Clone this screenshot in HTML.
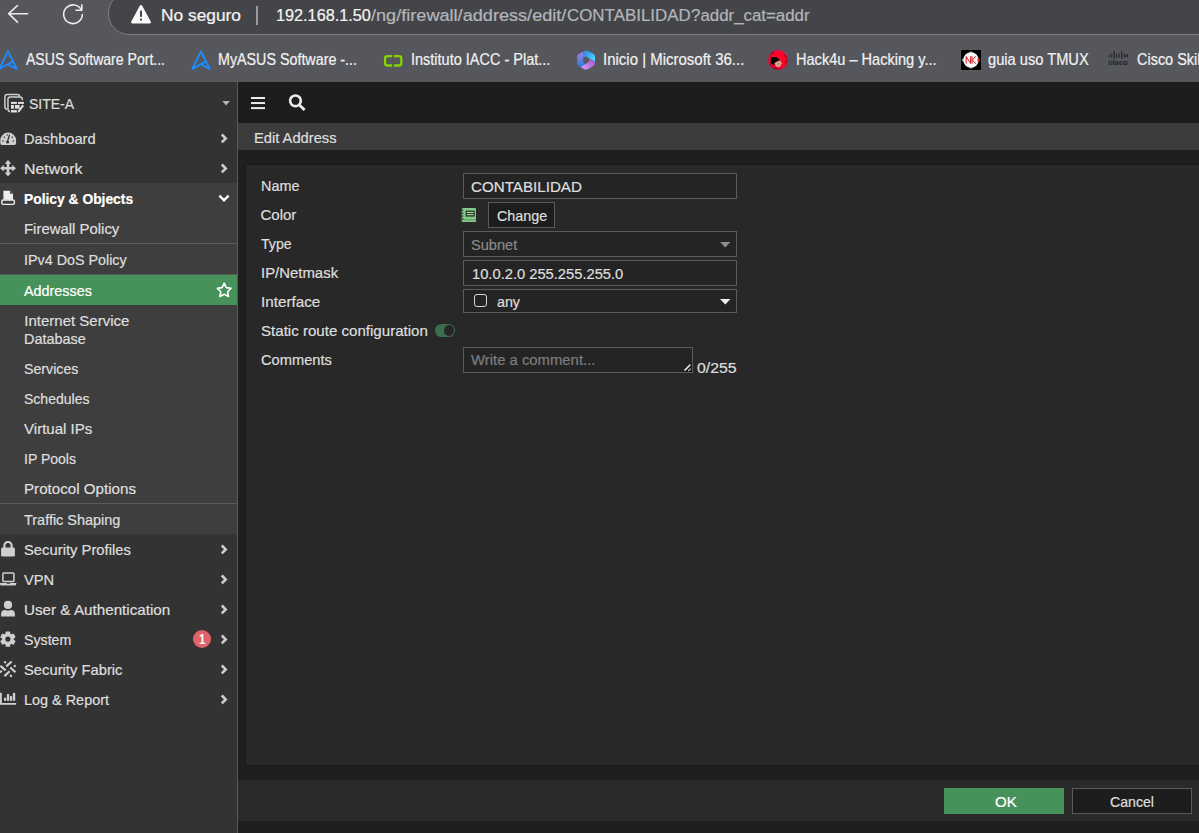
<!DOCTYPE html>
<html>
<head>
<meta charset="utf-8">
<title>Edit Address</title>
<style>
*{box-sizing:border-box;margin:0;padding:0}
html,body{width:1199px;height:833px;overflow:hidden;background:#1f1f1f;font-family:"Liberation Sans",sans-serif;color:#e2e2e2}
.abs{position:absolute}
.t{position:absolute;white-space:nowrap;line-height:1;transform-origin:0 0;-webkit-text-stroke:.22px currentColor}
/* browser chrome */
#chrome{position:absolute;left:0;top:0;width:1199px;height:82px;background:#56575c}
#pill{position:absolute;left:108px;top:-8px;width:1300px;height:42.6px;border-radius:21px;background:#444549;border:1.3px solid #7c7d81}
/* app */
#side{position:absolute;left:0;top:82px;width:238px;height:751px;background:#333333;border-right:1px solid #595959}
#topbar{position:absolute;left:238px;top:82px;width:961px;height:41px;background:#1d1d1d}
#hdr{position:absolute;left:238px;top:122.6px;width:961px;height:27.2px;background:#3c3c3c}
#panel{position:absolute;left:246px;top:164.7px;width:953px;height:600.3px;background:#282828;box-shadow:0 0 2.5px rgba(0,0,0,.45)}
#foot{position:absolute;left:238px;top:780px;width:961px;height:41px;background:#2a2a2a}
.sub{position:absolute;left:0;width:237px;background:#3e3e3e}
.sep{position:absolute;left:0;width:237px;height:1px;background:#5a5a5a}
.inp{position:absolute;left:463px;width:274px;height:26px;border:1px solid #5b5b5b;background:#242424}
</style>
</head>
<body>
<div id="chrome">
  <div id="pill"></div>
</div>
<div id="side">
  <div class="sub" style="top:101px;height:351px"></div>
  <div class="sep" style="top:161px"></div>
  <div class="sep" style="top:192px"></div>
  <div class="abs" style="left:0;top:193px;width:237px;height:30px;background:#47915a"></div>
  <div class="sep" style="top:421px"></div>
</div>
<div id="topbar"></div>
<div id="hdr"></div>
<div id="panel"></div>
<div id="foot"></div>

<!-- form controls -->
<div class="inp" style="top:173px"></div>
<div class="abs" style="left:488px;top:202px;width:67px;height:26px;border:1px solid #5b5b5b;background:#1d1d1d"></div>
<div class="inp" style="top:231.2px;height:25.8px"></div>
<div class="inp" style="top:260.2px;height:25.8px"></div>
<div class="inp" style="top:289px;height:24px"></div>
<div class="inp" style="top:347px;width:230px;height:26px"></div>
<!-- carets -->
<svg class="abs" style="left:720px;top:242px" width="11" height="6" viewBox="0 0 11 6"><path d="M0 0h10.5L5.25 5.6z" fill="#8c8c8c"/></svg>
<svg class="abs" style="left:720px;top:298.5px" width="11" height="6" viewBox="0 0 11 6"><path d="M0 0h10.5L5.25 5.6z" fill="#f0f0f0"/></svg>
<!-- interface checkbox icon -->
<div class="abs" style="left:473.5px;top:294.3px;width:13.6px;height:12.8px;border:1.6px solid #d8d8d8;border-radius:3px"></div>
<!-- toggle -->
<div class="abs" style="left:435px;top:324.2px;width:20.4px;height:12.8px;border-radius:6.4px;background:#3c6d4a"></div>
<div class="abs" style="left:443.9px;top:325.4px;width:10.4px;height:10.4px;border-radius:50%;background:#272727"></div>
<!-- textarea resize handle -->
<svg class="abs" style="left:681px;top:362px" width="11" height="10.5" viewBox="0 0 11 10.5"><path d="M10.5 0.5V10H1Z" fill="#121212"/><path d="M9.4 2.6L3.4 8.6" stroke="#e4e4e4" stroke-width="1.5" fill="none"/><path d="M9.6 6.6L7.2 9" stroke="#cfcfcf" stroke-width="1.1" fill="none"/></svg>
<!-- color icon (address book) -->
<svg class="abs" style="left:461px;top:207.8px" width="15.4" height="14.4" viewBox="0 0 15.4 14.4">
 <rect x="0.7" y="0" width="14.6" height="14.2" rx="1.7" fill="#84c985"/>
 <rect x="0.7" y="11.4" width="14.6" height="1" fill="#5f9a62"/>
 <rect x="0.4" y="1.8" width="2" height="1.3" fill="#2d442e"/><rect x="0.4" y="4.6" width="2" height="1.3" fill="#2d442e"/><rect x="0.4" y="7.4" width="2" height="1.3" fill="#2d442e"/><rect x="0.4" y="10.2" width="2" height="1.3" fill="#2d442e"/>
 <rect x="4.6" y="2.6" width="9.2" height="6" fill="#2a3b2b"/>
 <rect x="5.8" y="3.9" width="6.8" height="1.1" fill="#a6dca6"/><rect x="5.8" y="6.1" width="6.8" height="1.1" fill="#a6dca6"/>
</svg>
<!-- buttons -->
<div class="abs" style="left:944px;top:788px;width:120px;height:26px;background:#47915a"></div>
<div class="abs" style="left:1072px;top:788px;width:120px;height:26px;background:#1d1d1d;border:1px solid #5b5b5b"></div>


<!-- browser icons -->
<svg class="abs" style="left:0;top:0" width="110" height="36" viewBox="0 0 110 36" fill="none" stroke="#ececec" stroke-width="1.6" stroke-linecap="round" stroke-linejoin="round">
 <path d="M27.6 13.7H8.7M17.5 5.5L8.7 13.7L17.5 22.1"/>
 <path d="M81.5 10.3A9.35 9.35 0 1 0 82.35 14.5M81.8 4.7V10.2H76"/>
</svg>
<svg class="abs" style="left:129.5px;top:4px" width="22" height="21" viewBox="0 0 22 21"><path d="M11 2.6L19.4 18.1H2.6Z" fill="#fafafa" stroke="#fafafa" stroke-width="3" stroke-linejoin="round"/><rect x="10" y="6.6" width="2" height="6.4" rx="0.7" fill="#444549"/><rect x="10" y="14.6" width="2" height="2.2" rx="0.8" fill="#414247"/></svg>
<div class="abs" style="left:256.2px;top:5.5px;width:1.5px;height:19px;background:#9a9b9f"></div>
<!-- favicons -->
<svg class="abs" style="left:-2.2px;top:49.5px" width="20" height="20" viewBox="0 0 20 20" fill="none" stroke="#1b8cff" stroke-width="1.9" stroke-linecap="round" stroke-linejoin="round"><path d="M10 1.3L1.3 18.9L14.5 11.6M10 1.3L18.7 18.9L10 14.4"/></svg>
<svg class="abs" style="left:191px;top:49.5px" width="20" height="20" viewBox="0 0 20 20" fill="none" stroke="#1b8cff" stroke-width="1.9" stroke-linecap="round" stroke-linejoin="round"><path d="M10 1.3L1.3 18.9L14.5 11.6M10 1.3L18.7 18.9L10 14.4"/></svg>
<svg class="abs" style="left:383px;top:53.5px" width="21" height="14" viewBox="0 0 21 14" fill="none" stroke="#86d400" stroke-width="2.3"><path d="M9.2 2.1H4.4Q2.1 2.1 2.1 4.4V9.2Q2.1 11.5 4.4 11.5H9.2M10.9 2.1H16Q18.3 2.1 18.3 4.4V9.2Q18.3 11.5 16 11.5H10.9"/></svg>
<svg class="abs" style="left:576px;top:49px" width="20" height="22" viewBox="0 0 20 22">
 <defs>
  <linearGradient id="m1" x1="0" y1="0" x2="0" y2="1"><stop offset="0" stop-color="#b07ee8"/><stop offset="1" stop-color="#1f7fe0"/></linearGradient>
  <linearGradient id="m2" x1="0" y1="0" x2="1" y2="1"><stop offset="0" stop-color="#2b7fe6"/><stop offset="1" stop-color="#4fe6ff"/></linearGradient>
  <linearGradient id="m3" x1="0" y1="1" x2="1" y2="0"><stop offset="0" stop-color="#e89bff"/><stop offset="1" stop-color="#8a55c8"/></linearGradient>
 </defs>
 <path d="M7.2 2.6L2.6 5.3Q1.2 6.2 1.2 7.8V14.3Q1.2 15.9 2.6 16.7L4.6 17.9L9.4 15.2L7.8 13.9Q7.2 13.4 7.2 12.6Z" fill="url(#m1)"/>
 <path d="M7.2 2.6Q10 0.6 12.6 2.2L17.6 5.1Q19 6 19 7.6V12.6L13.2 9.2L10.6 7.7Q9.2 7.1 7.2 8.4Z" fill="url(#m2)"/>
 <path d="M19 12.6V14.3Q19 15.9 17.6 16.8L12.6 19.8Q10 21.4 7.4 19.7L4.6 17.9L11.8 13.6Q13.2 12.8 13.2 11.4V9.2Z" fill="url(#m3)"/>
</svg>
<svg class="abs" style="left:768px;top:50px" width="20" height="20" viewBox="0 0 20 20">
 <circle cx="10" cy="10" r="9.9" fill="#fd0429"/>
 <path d="M2.5 6.6V15.4L6 17.6L10 18.6" stroke="#b00420" stroke-width="1.1" fill="none"/>
 <path d="M3 7.1H8.2L11.7 9.7L10.3 11L7.3 12.7L6 15.4L3 13.6Z" fill="#050102"/>
 <path d="M6.3 13.3L9 11.4L12.4 10.5L13.7 13.6L11.8 17.4L8.2 16.6Z" fill="#dba48e"/>
 <path d="M9.6 14.2L11.6 13.4M10.6 15.6L12 15.2" stroke="#9a6a62" stroke-width=".7" fill="none"/>
 <path d="M5.4 18.3L10.6 19.5L13.6 17.6" stroke="#40020c" stroke-width=".9" fill="none"/>
 <path d="M2 5.2Q3.6 2.8 6.4 1.6" stroke="#3a0410" stroke-width="0.9" fill="none"/>
 <path d="M15.6 4.6L19.2 8.2M17.4 11.2L19.4 10M17.6 12.4L18.8 14.6" stroke="#5a0514" stroke-width="1" fill="none"/>
 <circle cx="10" cy="10" r="9.6" fill="none" stroke="#c8145c" stroke-width="0.8" opacity=".75"/>
</svg>
<svg class="abs" style="left:961px;top:50px" width="20" height="20" viewBox="0 0 20 20">
 <rect width="20" height="20" fill="#000"/>
 <path d="M10 0.6L19.4 10L10 19.4L0.6 10Z" fill="#3a3a3a"/><path d="M10 1.6L18.4 10L10 18.4L1.6 10Z" fill="#d8dcdc" opacity=".55"/>
 <circle cx="10" cy="10" r="7.7" fill="#f6f8f8"/>
 <path d="M0.8 10L2.6 8.2V11.8Z" fill="#d0d0d0"/>
 <path d="M19.4 10L16.6 7.4V12.6Z" fill="#e01216"/>
 <path d="M5.2 13.6V6.6L9.6 13.4V6.4M11 6.2V13.8M15 6.2L11.2 10.2L15.2 13.8" stroke="#dd1418" stroke-width="1" fill="none"/>
</svg>
<svg class="abs" style="left:1108px;top:50px" width="21" height="16" viewBox="0 0 21 16" fill="none" stroke="#2b2b2f" stroke-linecap="round">
 <path stroke-width="1.3" d="M1.2 4.9V6.7M3.7 4.1V7.1M6.2 1.7V8.4M8.7 4.1V7.1M11.2 4.1V7.1M13.7 1.7V8.4M16.2 4.1V7.1M18 4.9V6.7M19.6 4.9V6.7"/>
 <text x="0.3" y="14.7" font-family="Liberation Sans, sans-serif" font-size="7.8" font-weight="700" fill="#27272b" stroke="#27272b" stroke-width=".15" textLength="19.6" lengthAdjust="spacingAndGlyphs">cisco</text>
</svg>


<!-- sidebar icons -->
<svg class="abs" style="left:3px;top:93px" width="22" height="21" viewBox="0 0 22 21" fill="none" stroke="#cfcfcf" stroke-width="1.5">
 <path d="M4 16.3Q1.9 15.8 1.9 13.4V4Q1.9 1.6 4.3 1.6H14.4Q16.5 1.6 16.9 3.3"/>
 <path d="M7 18.7Q4.95 18.2 4.95 15.8V6.3Q4.95 3.9 7.35 3.9H16.9Q19.3 3.9 19.3 6.3V7.2"/>
 <g stroke="none" fill="#e2e2e2"><rect x="8" y="8.9" width="5.9" height="2"/><rect x="15" y="8.9" width="5.9" height="2"/><rect x="8" y="12" width="2.9" height="3.7"/><rect x="12" y="12" width="4.6" height="3.7"/><rect x="8" y="17.1" width="5.9" height="2.4"/><path d="M19.4 11.4L21 13L16.4 19L14.7 19.5L15.1 17.6Z"/></g>
</svg>
<svg class="abs" style="left:0;top:131.5px" width="17" height="14" viewBox="0 0 17 14"><path d="M8.2 0.6A7.9 7.9 0 0 0 0.3 8.5V11Q0.3 12.9 2 12.9H14.4Q16.1 12.9 16.1 11V8.5A7.9 7.9 0 0 0 8.2 0.6Z" fill="#cfcfcf"/><path d="M9.6 2.6L7.4 9.6" stroke="#333" stroke-width="1.3" fill="none"/><circle cx="7.6" cy="10" r="1.5" fill="#333"/><g fill="#333"><circle cx="3" cy="9" r=".8"/><circle cx="4.4" cy="5.2" r=".8"/><circle cx="12.2" cy="5.2" r=".8"/><circle cx="13.4" cy="9" r=".8"/><circle cx="7.2" cy="3" r=".7"/></g></svg>
<svg class="abs" style="left:0;top:160px" width="17" height="17" viewBox="0 0 17 17" fill="#cfcfcf"><path d="M8 0L11.3 3.8H9.3V6.9H12.2V4.9L16 8.2L12.2 11.5V9.5H9.3V12.6H11.3L8 16.4L4.7 12.6H6.7V9.5H3.8V11.5L0 8.2L3.8 4.9V6.9H6.7V3.8H4.7Z"/></svg>
<svg class="abs" style="left:0;top:190px" width="17" height="16" viewBox="0 0 17 16"><path d="M3.4 0.8H10.2L13 3.6V9.6H3.4Z" fill="#efefef"/><path d="M10.2 0.8V3.6H13" fill="#3e3e3e" stroke="#3e3e3e" stroke-width=".4"/><rect x="1.8" y="10" width="12.6" height="4.4" rx="1.4" fill="#3e3e3e" stroke="#efefef" stroke-width="1.4"/><path d="M3.4 9.6H7.4V8.2H13V9.6" fill="#efefef"/></svg>
<svg class="abs" style="left:0;top:540px" width="17" height="18" viewBox="0 0 17 18"><rect x="1.1" y="7.6" width="13.8" height="9" rx="1.4" fill="#cfcfcf"/><path d="M4.4 8V5.6A3.6 3.6 0 0 1 11.6 5.6V8" fill="none" stroke="#cfcfcf" stroke-width="2.2"/></svg>
<svg class="abs" style="left:0;top:571px" width="17" height="16" viewBox="0 0 17 16"><rect x="2.9" y="2" width="11" height="8.6" rx=".8" fill="none" stroke="#cfcfcf" stroke-width="1.5"/><path d="M0 12H6.4L7 12.8H9.6L10.2 12H16.3V12.9Q16.3 14.6 14.6 14.6H1.7Q0 14.6 0 12.9Z" fill="#cfcfcf"/></svg>
<svg class="abs" style="left:0;top:600px" width="17" height="18" viewBox="0 0 17 18" fill="#cfcfcf"><circle cx="8" cy="4.9" r="4.1"/><path d="M1.1 16.6V14Q1.1 9.9 5 9.9H5.6Q8 11 10.4 9.9H11Q14.9 9.9 14.9 14V16.6Q14.9 16.6 13.6 16.6H2.4Q1.1 16.6 1.1 16.6Z"/></svg>
<svg class="abs" style="left:0;top:631px" width="17" height="17" viewBox="0 0 17 17"><g transform="translate(7.9 8.1)"><g fill="#cfcfcf"><circle r="5.9"/><g id="gt"><rect x="-2.3" y="-7.7" width="4.6" height="15.4" rx=".9"/></g><use href="#gt" transform="rotate(60)"/><use href="#gt" transform="rotate(120)"/></g><circle r="2.6" fill="#333"/></g></svg>
<svg class="abs" style="left:0;top:660px" width="17" height="19" viewBox="0 0 17 19" fill="none" stroke="#cfcfcf" stroke-width="2.2"><path d="M6.2 6.3L11.7 1.5M0.4 5.8L5.6 10.4M10.2 7.5L15.5 12.2M4.5 16.1L9.6 11.2"/><path d="M4.3 1.5L5.9 3.1M14 6.8L15.6 5.4M0 12.4L1.8 10.8M10.1 15.1L11.8 16.7" stroke-width="2.1"/></svg>
<svg class="abs" style="left:0;top:692px" width="17" height="14" viewBox="0 0 17 14" fill="#cfcfcf"><path d="M0 .8H1.8V10.9H16.2V12.8H0Z"/><rect x="4" y="5.7" width="2.2" height="3.1"/><rect x="6.9" y="2" width="2.3" height="6.8"/><rect x="9.9" y="4.1" width="2.2" height="4.7"/><rect x="12.8" y="0.9" width="2.4" height="7.9"/></svg>
<!-- chevrons -->
<svg class="abs" style="left:222px;top:101px" width="9" height="5" viewBox="0 0 9 5"><path d="M.3 0H7.9L4.1 4.4Z" fill="#b4b4b4"/></svg>
<svg class="abs" style="left:219.5px;top:132.8px" width="9" height="11" viewBox="0 0 9 11" fill="none" stroke="#cdcdcd" stroke-width="2.6"><path d="M1.8 1.5L5.7 5.45L1.8 9.4"/></svg><svg class="abs" style="left:219.5px;top:162.8px" width="9" height="11" viewBox="0 0 9 11" fill="none" stroke="#cdcdcd" stroke-width="2.6"><path d="M1.8 1.5L5.7 5.45L1.8 9.4"/></svg><svg class="abs" style="left:219.5px;top:543.8px" width="9" height="11" viewBox="0 0 9 11" fill="none" stroke="#cdcdcd" stroke-width="2.6"><path d="M1.8 1.5L5.7 5.45L1.8 9.4"/></svg><svg class="abs" style="left:219.5px;top:573.8px" width="9" height="11" viewBox="0 0 9 11" fill="none" stroke="#cdcdcd" stroke-width="2.6"><path d="M1.8 1.5L5.7 5.45L1.8 9.4"/></svg><svg class="abs" style="left:219.5px;top:603.7px" width="9" height="11" viewBox="0 0 9 11" fill="none" stroke="#cdcdcd" stroke-width="2.6"><path d="M1.8 1.5L5.7 5.45L1.8 9.4"/></svg><svg class="abs" style="left:219.5px;top:633.7px" width="9" height="11" viewBox="0 0 9 11" fill="none" stroke="#cdcdcd" stroke-width="2.6"><path d="M1.8 1.5L5.7 5.45L1.8 9.4"/></svg><svg class="abs" style="left:219.5px;top:663.8px" width="9" height="11" viewBox="0 0 9 11" fill="none" stroke="#cdcdcd" stroke-width="2.6"><path d="M1.8 1.5L5.7 5.45L1.8 9.4"/></svg><svg class="abs" style="left:219.5px;top:693.8px" width="9" height="11" viewBox="0 0 9 11" fill="none" stroke="#cdcdcd" stroke-width="2.6"><path d="M1.8 1.5L5.7 5.45L1.8 9.4"/></svg>
<svg class="abs" style="left:218px;top:193.5px" width="12" height="9" viewBox="0 0 12 9" fill="none" stroke="#fff" stroke-width="2.5"><path d="M1.4 1.7L6 6.3L10.6 1.7"/></svg>
<svg class="abs" style="left:216px;top:281.9px" width="17" height="16" viewBox="0 0 17 16" fill="none" stroke="#fff" stroke-width="1.6" stroke-linejoin="round"><path d="M8.2 1.2L10.3 5.6L15.1 6.3L11.6 9.7L12.5 14.5L8.2 12.2L3.9 14.5L4.8 9.7L1.3 6.3L6.1 5.6Z"/></svg>
<div class="abs" style="left:192.7px;top:630px;width:18px;height:18px;border-radius:50%;background:#df636a"></div>
<!-- topbar icons -->
<div class="abs" style="left:250.9px;top:96.8px;width:14.3px;height:2.4px;background:#ececec;box-shadow:0 5.05px 0 #ececec,0 10.1px 0 #ececec"></div>
<svg class="abs" style="left:288px;top:92.9px" width="19" height="19" viewBox="0 0 19 19" fill="none" stroke="#ececec"><circle cx="7.45" cy="7.8" r="5.35" stroke-width="2.6"/><path d="M11.4 11.9L15.6 16.1" stroke-width="2.8" stroke-linecap="square"/></svg>

<div class="t" style="left:161.2px;top:7.00px;font-size:17.2px;color:#f4f4f4;transform:scaleX(1.0087);">No seguro</div>
<div class="t" style="left:275.7px;top:7.00px;font-size:17.2px;color:#f4f4f4;transform:scaleX(0.9446);">192.168.1.50</div>
<div class="t" style="left:370.8px;top:7.00px;font-size:17.2px;color:#b4b5b9;transform:scaleX(1.0543);">/ng/firewall/address/edit/</div>
<div class="t" style="left:566.6px;top:7.00px;font-size:17.2px;color:#b4b5b9;transform:scaleX(0.9837);">CONTABILIDAD</div>
<div class="t" style="left:690.6px;top:7.00px;font-size:17.2px;color:#b4b5b9;transform:scaleX(0.9811);">?addr_cat=addr</div>
<div class="t" style="left:26.0px;top:52.00px;font-size:15.6px;color:#f0f0f0;transform:scaleX(0.9010);">ASUS Software Port...</div>
<div class="t" style="left:218.3px;top:52.00px;font-size:15.6px;color:#f0f0f0;transform:scaleX(0.9165);">MyASUS Software -...</div>
<div class="t" style="left:410.7px;top:52.00px;font-size:15.6px;color:#f0f0f0;transform:scaleX(0.9291);">Instituto IACC - Plat...</div>
<div class="t" style="left:602.7px;top:52.00px;font-size:15.6px;color:#f0f0f0;transform:scaleX(0.9609);">Inicio | Microsoft 36...</div>
<div class="t" style="left:795.9px;top:52.00px;font-size:15.6px;color:#f0f0f0;transform:scaleX(0.9340);">Hack4u – Hacking y...</div>
<div class="t" style="left:988.1px;top:52.00px;font-size:15.6px;color:#f0f0f0;transform:scaleX(0.9395);">guia uso TMUX</div>
<div class="t" style="left:1137.1px;top:52.00px;font-size:15.6px;color:#f0f0f0;transform:scaleX(0.9270);">Cisco Skills</div>
<div class="t" style="left:29.0px;top:96.00px;font-size:15px;color:#dedede;transform:scaleX(0.9329);">SITE-A</div>
<div class="t" style="left:24.3px;top:131.00px;font-size:15px;color:#dedede;transform:scaleX(0.9756);">Dashboard</div>
<div class="t" style="left:24.3px;top:161.00px;font-size:15px;color:#dedede;transform:scaleX(1.0615);">Network</div>
<div class="t" style="left:24.3px;top:191.00px;font-size:15px;color:#ffffff;font-weight:700;transform:scaleX(0.9216);">Policy &amp; Objects</div>
<div class="t" style="left:24.3px;top:221.00px;font-size:15px;color:#dedede;transform:scaleX(0.9942);">Firewall Policy</div>
<div class="t" style="left:24.3px;top:252.00px;font-size:15px;color:#dedede;transform:scaleX(0.9549);">IPv4 DoS Policy</div>
<div class="t" style="left:24.3px;top:283.00px;font-size:15px;color:#ffffff;transform:scaleX(0.9580);">Addresses</div>
<div class="t" style="left:24.3px;top:313.00px;font-size:15px;color:#dedede;">Internet Service</div>
<div class="t" style="left:24.3px;top:331.00px;font-size:15px;color:#dedede;transform:scaleX(0.9623);">Database</div>
<div class="t" style="left:24.3px;top:361.00px;font-size:15px;color:#dedede;transform:scaleX(0.9456);">Services</div>
<div class="t" style="left:24.3px;top:391.00px;font-size:15px;color:#dedede;transform:scaleX(0.9349);">Schedules</div>
<div class="t" style="left:24.3px;top:421.00px;font-size:15px;color:#dedede;transform:scaleX(1.0045);">Virtual IPs</div>
<div class="t" style="left:24.3px;top:451.00px;font-size:15px;color:#dedede;transform:scaleX(0.9354);">IP Pools</div>
<div class="t" style="left:24.3px;top:481.00px;font-size:15px;color:#dedede;transform:scaleX(1.0100);">Protocol Options</div>
<div class="t" style="left:24.3px;top:512.00px;font-size:15px;color:#dedede;transform:scaleX(0.9634);">Traffic Shaping</div>
<div class="t" style="left:24.3px;top:542.00px;font-size:15px;color:#dedede;transform:scaleX(0.9864);">Security Profiles</div>
<div class="t" style="left:24.3px;top:572.00px;font-size:15px;color:#dedede;transform:scaleX(0.9759);">VPN</div>
<div class="t" style="left:24.3px;top:602.00px;font-size:15px;color:#dedede;transform:scaleX(1.0141);">User &amp; Authentication</div>
<div class="t" style="left:24.3px;top:632.00px;font-size:15px;color:#dedede;transform:scaleX(0.9457);">System</div>
<div class="t" style="left:24.3px;top:662.00px;font-size:15px;color:#dedede;transform:scaleX(0.9847);">Security Fabric</div>
<div class="t" style="left:24.3px;top:692.00px;font-size:15px;color:#dedede;transform:scaleX(0.9616);">Log &amp; Report</div>
<div class="t" style="left:198.7px;top:632.00px;font-size:14px;color:#ffffff;transform:scaleX(0.8337);text-shadow:0 0 .6px #fff;">1</div>
<div class="t" style="left:253.7px;top:130.00px;font-size:15px;color:#dedede;transform:scaleX(0.9796);">Edit Address</div>
<div class="t" style="left:260.5px;top:178.00px;font-size:15px;color:#dedede;transform:scaleX(0.9596);">Name</div>
<div class="t" style="left:260.5px;top:207.00px;font-size:15px;color:#dedede;">Color</div>
<div class="t" style="left:260.5px;top:236.00px;font-size:15px;color:#dedede;transform:scaleX(0.9406);">Type</div>
<div class="t" style="left:260.5px;top:265.00px;font-size:15px;color:#dedede;transform:scaleX(0.9944);">IP/Netmask</div>
<div class="t" style="left:260.5px;top:294.00px;font-size:15px;color:#dedede;transform:scaleX(1.0158);">Interface</div>
<div class="t" style="left:260.5px;top:323.00px;font-size:15px;color:#dedede;transform:scaleX(1.0058);">Static route configuration</div>
<div class="t" style="left:260.5px;top:352.00px;font-size:15px;color:#dedede;transform:scaleX(0.9775);">Comments</div>
<div class="t" style="left:471.4px;top:179.00px;font-size:15px;color:#dedede;transform:scaleX(1.0105);">CONTABILIDAD</div>
<div class="t" style="left:496.7px;top:208.00px;font-size:15px;color:#dedede;transform:scaleX(0.9553);">Change</div>
<div class="t" style="left:471.4px;top:237.00px;font-size:15px;color:#8a8a8a;transform:scaleX(0.9717);">Subnet</div>
<div class="t" style="left:472.2px;top:266.00px;font-size:15px;color:#dedede;transform:scaleX(0.9805);">10.0.2.0 255.255.255.0</div>
<div class="t" style="left:496.7px;top:294.00px;font-size:15px;color:#dedede;transform:scaleX(0.9509);">any</div>
<div class="t" style="left:471.4px;top:352.00px;font-size:15px;color:#7d7d7d;transform:scaleX(0.9905);">Write a comment...</div>
<div class="t" style="left:696.7px;top:360.00px;font-size:15px;color:#dedede;transform:scaleX(1.0547);">0/255</div>
<div class="t" style="left:995.3px;top:794.00px;font-size:15px;color:#ffffff;transform:scaleX(1.0098);">OK</div>
<div class="t" style="left:1110.3px;top:794.00px;font-size:15px;color:#dedede;transform:scaleX(0.9421);">Cancel</div>
</body>
</html>
